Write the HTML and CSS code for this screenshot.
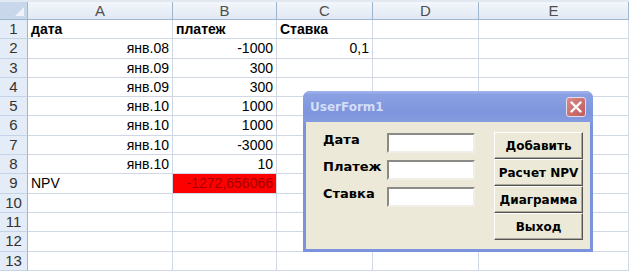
FILE: index.html
```
<!doctype html>
<html lang="ru">
  <head>
    <meta charset="UTF-8" />
    <title>NPV - Excel</title>
    <link rel="stylesheet" href="styles.css">
  </head>
  <body>
    <div class="sheet">
      <div class="strip"></div>
      <div class="grid">
        <div class="corner"><span class="tri"></span></div>
        <div class="colh">A</div><div class="colh">B</div><div class="colh">C</div><div class="colh">D</div><div class="colh">E</div>

        <div class="rowh">1</div><div class="c b">дата</div><div class="c b">платеж</div><div class="c b">Ставка</div><div class="c"></div><div class="c"></div>
        <div class="rowh">2</div><div class="c r">янв.08</div><div class="c r">-1000</div><div class="c r">0,1</div><div class="c"></div><div class="c"></div>
        <div class="rowh">3</div><div class="c r">янв.09</div><div class="c r">300</div><div class="c"></div><div class="c"></div><div class="c"></div>
        <div class="rowh">4</div><div class="c r">янв.09</div><div class="c r">300</div><div class="c"></div><div class="c"></div><div class="c"></div>
        <div class="rowh">5</div><div class="c r">янв.10</div><div class="c r">1000</div><div class="c"></div><div class="c"></div><div class="c"></div>
        <div class="rowh">6</div><div class="c r">янв.10</div><div class="c r">1000</div><div class="c"></div><div class="c"></div><div class="c"></div>
        <div class="rowh">7</div><div class="c r">янв.10</div><div class="c r">-3000</div><div class="c"></div><div class="c"></div><div class="c"></div>
        <div class="rowh">8</div><div class="c r">янв.10</div><div class="c r">10</div><div class="c"></div><div class="c"></div><div class="c"></div>
        <div class="rowh">9</div><div class="c">NPV</div><div class="c r npv">-1272,656066</div><div class="c"></div><div class="c"></div><div class="c"></div>
        <div class="rowh">10</div><div class="c"></div><div class="c"></div><div class="c"></div><div class="c"></div><div class="c"></div>
        <div class="rowh">11</div><div class="c"></div><div class="c"></div><div class="c"></div><div class="c"></div><div class="c"></div>
        <div class="rowh">12</div><div class="c"></div><div class="c"></div><div class="c"></div><div class="c"></div><div class="c"></div>
        <div class="rowh">13</div><div class="c"></div><div class="c"></div><div class="c"></div><div class="c"></div><div class="c"></div>
      </div>

      <div class="userform">
        <div class="titlebar">
          <span class="title">UserForm1</span>
          <span class="close">
            <svg width="12" height="12" viewBox="0 0 12 12">
              <path d="M1.5 1.5 L10.5 10.5 M10.5 1.5 L1.5 10.5" stroke="#fff" stroke-width="2.4" stroke-linecap="round" />
            </svg>
          </span>
        </div>
        <div class="form-body">
          <div class="fields">
            <label class="lbl">Дата</label><div class="textbox"></div>
            <label class="lbl">Платеж</label><div class="textbox"></div>
            <label class="lbl">Ставка</label><div class="textbox"></div>
          </div>
          <div class="buttons">
            <button class="btn">Добавить</button>
            <button class="btn">Расчет NPV</button>
            <button class="btn">Диаграмма</button>
            <button class="btn">Выход</button>
          </div>
        </div>
      </div>
    </div>
  </body>
</html>
```

FILE: styles.css
```
* {
  margin: 0;
  padding: 0;
  box-sizing: border-box;
}

body {
  width: 629px;
  height: 272px;
  overflow: hidden;
  background: #fff;
  font-family: 'Liberation Sans', Arial, sans-serif;
  font-size: 14px;
  color: #000;
}

.sheet {
  position: relative;
  width: 629px;
  height: 272px;
}

.strip {
  height: 3px;
  background: #e3e9f2;
  border-bottom: 1px solid #c9d5e5;
}

.grid {
  display: grid;
  grid-template-columns: 28px 145px 104px 96px 106px 150px;
  grid-template-rows: 18px repeat(13, 19.3px);
  margin-top: -1px;
}

.corner {
  position: relative;
  background: #c9d7eb;
  border-right: 1px solid #9eb6ce;
  border-bottom: 1px solid #9eb6ce;
}

.tri {
  position: absolute;
  right: 3px;
  bottom: 3px;
  width: 0;
  height: 0;
  border-left: 9px solid transparent;
  border-bottom: 9px solid #eef3fa;
}

.colh {
  background: linear-gradient(#f3f6fb, #e1e9f4);
  border-right: 1px solid #9eb6ce;
  border-bottom: 1px solid #9eb6ce;
  text-align: center;
  line-height: 17px;
  font-size: 15px;
  color: #4f4f4f;
}

.rowh {
  background: #e4ecf7;
  border-right: 1px solid #9eb6ce;
  border-bottom: 1px solid #c5d3e6;
  text-align: center;
  font-size: 15px;
  line-height: 18px;
  color: #333;
}

.c {
  border-right: 1px solid #d0d7e5;
  border-bottom: 1px solid #d0d7e5;
  padding: 0 3px;
  line-height: 18px;
  white-space: nowrap;
}

.b {
  font-weight: bold;
}

.r {
  text-align: right;
}

.npv {
  background: #ff0000;
  color: #a10000;
}

.userform {
  position: absolute;
  left: 303px;
  top: 91px;
  width: 290px;
  height: 161px;
  background: #7b93dc;
  border-radius: 7px 7px 0 0;
  padding: 0 3px 3px;
  display: flex;
  flex-direction: column;
}

.titlebar {
  height: 31px;
  margin: 0 -3px;
  padding: 0 7px 0 7px;
  border-radius: 7px 7px 0 0;
  background: linear-gradient(#a3b6ee 0%, #8aa0e2 12%, #7d95dd 70%, #869ce0 100%);
  display: flex;
  align-items: center;
  justify-content: space-between;
}

.title {
  font-family: 'DejaVu Sans', sans-serif;
  font-weight: bold;
  font-size: 12px;
  color: #d3def6;
}

.close {
  width: 20px;
  height: 20px;
  border: 1px solid #e6dce6;
  border-radius: 3px;
  background: linear-gradient(135deg, #d88a8a, #c05a5a);
  display: flex;
  align-items: center;
  justify-content: center;
}

.form-body {
  flex: 1;
  background: #ece9d8;
  display: flex;
  padding: 10px 0 0 17px;
}

.fields {
  display: grid;
  grid-template-columns: 64px 88px;
  grid-auto-rows: 20px;
  row-gap: 7px;
  margin-top: 1px;
}

.lbl {
  font-family: 'DejaVu Sans', sans-serif;
  font-weight: bold;
  font-size: 13px;
  line-height: 14px;
}

.textbox {
  background: #fff;
  border: 2px solid;
  border-color: #8a8a86 #f0eee6 #f0eee6 #8a8a86;
}

.buttons {
  display: flex;
  flex-direction: column;
  margin-left: 19px;
}

.btn {
  width: 89px;
  height: 27px;
  background: #ece9d8;
  border: 1px solid;
  border-color: #fff #555 #555 #fff;
  box-shadow: inset -1px -1px #aca899;
  font-family: 'DejaVu Sans', sans-serif;
  font-weight: bold;
  font-size: 12px;
  color: #000;
}
```
